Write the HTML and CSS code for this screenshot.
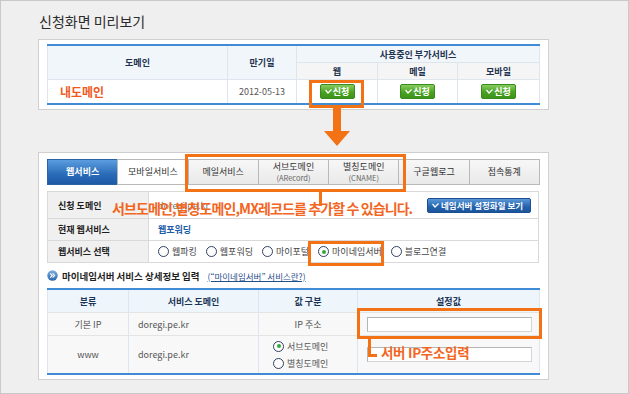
FILE: index.html
```html
<!DOCTYPE html>
<html>

<head>
    <meta charset="utf-8">
    <title>신청화면 미리보기</title>
    <link rel="stylesheet" href="styles.css">
</head>

<body>
    <div class="page">
        <h1 class="title">신청화면 미리보기</h1>

        <div class="card card-top">
            <table class="svc-table">
                <colgroup>
                    <col style="width: 180px">
                    <col style="width: 69px">
                    <col style="width: 81px">
                    <col style="width: 80px">
                    <col style="width: 82px">
                </colgroup>
                <tr class="head1">
                    <th rowspan="2">도메인</th>
                    <th rowspan="2">만기일</th>
                    <th colspan="3">사용중인 부가서비스</th>
                </tr>
                <tr class="head2">
                    <th>웹</th>
                    <th>메일</th>
                    <th>모바일</th>
                </tr>
                <tr class="data">
                    <td class="my-domain">내도메인</td>
                    <td class="date">2012-05-13</td>
                    <td class="center"><span class="btn-green"><svg width="7" height="5" viewBox="0 0 7 5"><polyline points="0.5,1 3,4 6.5,0.5" fill="none" stroke="#fff" stroke-width="1.2"/></svg>신청</span></td>
                    <td class="center"><span class="btn-green"><svg width="7" height="5" viewBox="0 0 7 5"><polyline points="0.5,1 3,4 6.5,0.5" fill="none" stroke="#fff" stroke-width="1.2"/></svg>신청</span></td>
                    <td class="center"><span class="btn-green"><svg width="7" height="5" viewBox="0 0 7 5"><polyline points="0.5,1 3,4 6.5,0.5" fill="none" stroke="#fff" stroke-width="1.2"/></svg>신청</span></td>
                </tr>
            </table>
        </div>

        <div class="card card-main">
            <ul class="tabs">
                <li class="tab active">웹서비스</li>
                <li class="tab white">모바일서비스</li>
                <li class="tab">메일서비스</li>
                <li class="tab two">서브도메인<small>(ARecord)</small></li>
                <li class="tab two">별칭도메인<small>(CNAME)</small></li>
                <li class="tab">구글웹로그</li>
                <li class="tab">접속통계</li>
            </ul>

            <table class="info">
                <tr class="r1">
                    <th>신청 도메인</th>
                    <td>
                        <div class="row-flex">
                            <span class="gray">doregi.pe.kr</span>
                            <span class="btn-blue"><svg width="7" height="5" viewBox="0 0 7 5"><polyline points="0.5,1 3,4 6.5,0.5" fill="none" stroke="#fff" stroke-width="1.2"/></svg>네임서버 설정화일 보기</span>
                        </div>
                    </td>
                </tr>
                <tr class="r2">
                    <th>현재 웹서비스</th>
                    <td><span class="current">웹포워딩</span></td>
                </tr>
                <tr class="r3">
                    <th>웹서비스 선택</th>
                    <td>
                        <div class="radios">
                            <label><span class="radio"></span>웹파킹</label>
                            <label><span class="radio"></span>웹포워딩</label>
                            <label><span class="radio"></span>마이포털</label>
                            <label><span class="radio on"></span>마이네임서버</label>
                            <label><span class="radio"></span>블로그연결</label>
                        </div>
                    </td>
                </tr>
            </table>

            <div class="section-head">
                <svg width="11" height="11" viewBox="0 0 11 11">
                    <defs>
                        <linearGradient id="ic" x1="0" y1="0" x2="0" y2="1">
                            <stop offset="0" stop-color="#7fb0e0"/>
                            <stop offset="1" stop-color="#2a66ad"/>
                        </linearGradient>
                    </defs>
                    <circle cx="5.5" cy="5.5" r="5.2" fill="url(#ic)"/>
                    <polyline points="3.2,3.4 5.3,5.5 3.2,7.6" fill="none" stroke="#fff" stroke-width="1.1"/>
                    <polyline points="5.6,3.4 7.7,5.5 5.6,7.6" fill="none" stroke="#fff" stroke-width="1.1"/>
                </svg>
                <b>마이네임서버 서비스 상세정보 입력</b>
                <a class="help">(“마이네임서버” 서비스란?)</a>
            </div>

            <table class="detail">
                <colgroup>
                    <col style="width: 81px">
                    <col style="width: 130px">
                    <col style="width: 99px">
                    <col style="width: 182px">
                </colgroup>
                <tr class="head">
                    <th>분류</th>
                    <th>서비스 도메인</th>
                    <th>값 구분</th>
                    <th>설정값</th>
                </tr>
                <tr class="d1">
                    <td class="center">기본 IP</td>
                    <td class="left">doregi.pe.kr</td>
                    <td class="center">IP 주소</td>
                    <td class="left"><span class="input"></span></td>
                </tr>
                <tr class="d2">
                    <td class="center">www</td>
                    <td class="left">doregi.pe.kr</td>
                    <td class="left">
                        <div class="radio-col">
                            <label><span class="radio on"></span>서브도메인</label>
                            <label><span class="radio"></span>별칭도메인</label>
                        </div>
                    </td>
                    <td class="left"><span class="input"></span></td>
                </tr>
            </table>
        </div>

        <!-- 주석 표시 -->
        <div class="mark mark-btn"></div>
        <svg class="arrow" width="28" height="40" viewBox="0 0 28 40">
            <rect x="10" y="0" width="8" height="25" fill="#f47216"/>
            <polygon points="1,24 27,24 14,39" fill="#f47216"/>
        </svg>
        <div class="mark mark-tabs"></div>
        <div class="line line-tabs"></div>
        <div class="note note-tabs">서브도메인,별칭도메인,MX레코드를 추가할 수 있습니다.</div>
        <div class="mark mark-radio"></div>
        <div class="mark mark-input"></div>
        <div class="line line-input"></div>
        <div class="note note-input">서버 IP주소입력</div>
    </div>
</body>

</html>
```

FILE: styles.css
```css
body {
    margin: 0;
    padding: 0;
    font-family: "Noto Sans CJK KR", "Noto Sans", sans-serif;
}

.page {
    position: relative;
    width: 629px;
    height: 394px;
    box-sizing: border-box;
    border: 1px solid #c9c9c9;
    background-color: #efefef;
    padding: 11px 0 0 37px;
    overflow: hidden;
}

.title {
    margin: 0 0 9px 1px;
    font-size: 14px;
    line-height: 18px;
    font-weight: normal;
    color: #2b2b2b;
}

.card {
    width: 511px;
    box-sizing: border-box;
    background-color: #fff;
    border: 1px solid #d0d0d0;
}

.card-top {
    padding: 4px 8px;
}

.card-main {
    margin-top: 42px;
    padding: 6px 8px 4px;
}

table {
    border-collapse: collapse;
    table-layout: fixed;
    width: 492px;
}

th,
td {
    padding: 0;
    font-size: 9px;
}

/* 상단 서비스 표 */
.svc-table {
    border-top: 2px solid #3f8bd5;
    border-bottom: 2px solid #3f8bd5;
}

.svc-table th,
.svc-table td {
    border: 1px solid #dde6ee;
}

.svc-table th {
    background-color: #f1f6fb;
    color: #1d3350;
    font-weight: bold;
}

.svc-table .head1 th {
    height: 16px;
}

.svc-table .head2 th {
    height: 16px;
    background-color: #f5f5f5;
}

.svc-table .data td {
    height: 23px;
}

.my-domain {
    color: #f05a1e;
    font-size: 12px !important;
    font-weight: bold;
    padding-left: 12px !important;
}

.date {
    text-align: center;
    color: #555;
}

.center {
    text-align: center;
}

.btn-green {
    display: inline-flex;
    align-items: center;
    justify-content: center;
    gap: 1px;
    width: 35px;
    height: 15px;
    box-sizing: border-box;
    border: 1px solid #3b8a1e;
    border-radius: 2px;
    background: linear-gradient(#88cc5e, #4aa224 55%, #3c9419);
    color: #fff;
    font-weight: bold;
    font-size: 9px;
    vertical-align: middle;
}

/* 탭 */
.tabs {
    list-style: none;
    margin: 0;
    padding: 0;
    display: flex;
    height: 26px;
}

.tab {
    flex: 1;
    display: flex;
    flex-direction: column;
    align-items: center;
    justify-content: center;
    border: 1px solid #b9b9b9;
    margin-left: -1px;
    background: linear-gradient(#f7f7f7, #e9e9e9);
    color: #333;
    font-size: 9px;
    line-height: 12px;
}

.tab:first-child {
    margin-left: 0;
}

.tab.white {
    background: #fff;
}

.tab.active {
    background: linear-gradient(#5b9ddf, #2a6bb8 60%, #1d5aa6);
    border-color: #2a62a6;
    color: #fff;
    font-weight: bold;
}

.tab small {
    font-size: 7.5px;
    line-height: 10px;
    color: #666;
}

/* 정보 표 */
.info {
    margin-top: 6px;
    border: 1px solid #d3d3d3;
}

.info th,
.info td {
    border: 1px solid #d9d9d9;
}

.info th {
    width: 101px;
    background-color: #f0f0f0;
    text-align: left;
    padding-left: 10px;
    box-sizing: border-box;
    color: #1f1f1f;
}

.info td {
    padding-left: 9px;
}

.info .r1 td,
.info .r1 th {
    height: 26px;
}

.info .r2 td,
.info .r2 th {
    height: 21px;
}

.info .r3 td,
.info .r3 th {
    height: 21px;
}

.row-flex {
    display: flex;
    justify-content: space-between;
    align-items: center;
    padding-right: 7px;
}

.gray {
    color: #777;
}

.btn-blue {
    display: inline-flex;
    align-items: center;
    gap: 2px;
    height: 15px;
    width: 104px;
    box-sizing: border-box;
    padding-left: 4px;
    border: 1px solid #1c4f8f;
    border-radius: 2px;
    background: linear-gradient(#5a98d8, #2462ad 60%, #1b559c);
    color: #fff;
    font-weight: bold;
    font-size: 8.5px;
}

.current {
    color: #1c5ba8;
    font-weight: bold;
}

.radios {
    display: flex;
    gap: 9px;
    color: #444;
}

.radios label,
.radio-col label {
    display: flex;
    align-items: center;
    gap: 3px;
}

.radio {
    display: inline-block;
    position: relative;
    width: 9px;
    height: 9px;
    border: 1px solid #2f4160;
    border-radius: 50%;
    background: #fff;
}

.radio.on::after {
    content: "";
    position: absolute;
    left: 2.5px;
    top: 2.5px;
    width: 4px;
    height: 4px;
    border-radius: 50%;
    background: #36a83a;
}

/* 상세정보 */
.section-head {
    height: 25px;
    display: flex;
    align-items: center;
    gap: 4px;
    font-size: 9.5px;
    color: #1f1f1f;
}

.help {
    margin-left: 4px;
    font-size: 8.5px;
    color: #1f4e8c;
    text-decoration: underline;
}

.detail {
    border-top: 2px solid #3f8bd5;
    border-bottom: 2px solid #3f8bd5;
}

.detail th,
.detail td {
    border: 1px solid #dde6ee;
    border-top-color: #e4e4e4;
    border-bottom-color: #e4e4e4;
}

.detail th {
    height: 22px;
    background-color: #eef5fb;
    color: #1b3556;
    font-weight: bold;
}

.detail td {
    background-color: #f8f8f8;
    color: #555;
}

.detail .d1 td {
    height: 22px;
}

.detail .d2 td {
    height: 37px;
}

.detail .left {
    padding-left: 9px;
}

.radio-col {
    display: flex;
    flex-direction: column;
    gap: 4px;
    padding-left: 5px;
}

.input {
    display: block;
    width: 165px;
    height: 15px;
    box-sizing: border-box;
    background: #fff;
    border: 1px solid #b5b5b5;
    border-right-color: #d5d5d5;
    border-bottom-color: #d5d5d5;
}

/* 주황색 표시 */
.mark {
    position: absolute;
    border: 3px solid #f47216;
    box-sizing: border-box;
}

.mark-btn {
    left: 308px;
    top: 79px;
    width: 55px;
    height: 28px;
}

.arrow {
    position: absolute;
    left: 322px;
    top: 106px;
}

.mark-tabs {
    left: 184px;
    top: 153px;
    width: 221px;
    height: 38px;
}

.line {
    position: absolute;
    background: #f47216;
}

.line-tabs {
    left: 318px;
    top: 190px;
    width: 3px;
    height: 15px;
}

.note {
    position: absolute;
    color: #f2661f;
    font-weight: bold;
    white-space: nowrap;
}

.note-tabs {
    left: 111px;
    top: 197px;
    font-size: 14px;
    line-height: 20px;
    letter-spacing: -0.9px;
}

.mark-radio {
    left: 307px;
    top: 240px;
    width: 76px;
    height: 25px;
}

.mark-input {
    left: 356px;
    top: 307px;
    width: 185px;
    height: 31px;
}

.line-input {
    left: 367px;
    top: 337px;
    width: 3px;
    height: 19px;
}

.line-input::after {
    content: "";
    position: absolute;
    left: 0;
    bottom: 0;
    width: 9px;
    height: 3px;
    background: #f47216;
}

.note-input {
    left: 380px;
    top: 342px;
    font-size: 13.5px;
    line-height: 18px;
    letter-spacing: -0.3px;
}
```
